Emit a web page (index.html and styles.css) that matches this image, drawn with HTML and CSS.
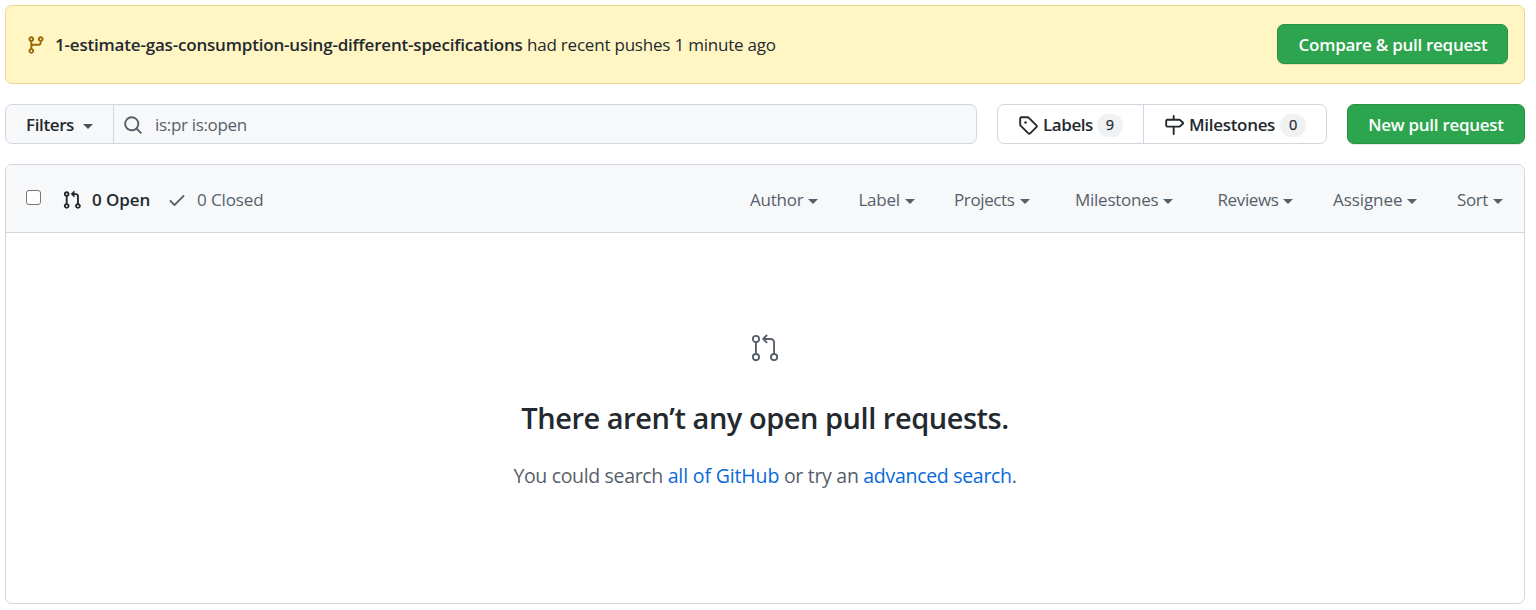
FILE: index.html
```
<!DOCTYPE html>
<html lang="en">
<head>
<meta charset="utf-8">
<title>Pull requests</title>
<link rel="stylesheet" href="styles.css">
</head>
<body>
<div class="flash">
  <svg class="icon flash-icon" viewBox="0 0 16 16"><path d="M11.75 2.5a.75.75 0 100 1.5.75.75 0 000-1.5zm-2.25.75a2.25 2.25 0 113 2.122V6A2.5 2.5 0 0110 8.5H6a1 1 0 00-1 1v1.128a2.251 2.251 0 11-1.5 0V5.372a2.25 2.25 0 111.5 0v1.836A2.492 2.492 0 016 7h4a1 1 0 001-1v-.628A2.25 2.25 0 019.5 3.25zM4.25 12a.75.75 0 100 1.5.75.75 0 000-1.5zM3.5 3.25a.75.75 0 111.5 0 .75.75 0 01-1.5 0z"/></svg>
  <strong class="branch">1-estimate-gas-consumption-using-different-specifications</strong>
  <span class="pushed">had recent pushes 1 minute ago</span>
  <a class="btn-primary compare">Compare &amp; pull request</a>
</div>

<div class="toolbar">
  <div class="search">
    <button class="filters"><span class="bar-text">Filters</span><i class="caret"></i></button>
    <div class="search-field">
      <svg class="icon" viewBox="0 0 16 16"><path d="M11.5 7a4.499 4.499 0 11-8.998 0A4.499 4.499 0 0111.5 7zm-.82 4.74a6 6 0 111.06-1.06l3.04 3.04a.75.75 0 11-1.06 1.06l-3.04-3.04z"/></svg>
      <span>is:pr is:open</span>
    </div>
  </div>
  <div class="subnav">
    <a class="subnav-item labels">
      <svg class="icon" viewBox="0 0 16 16"><path d="M2.5 7.775V2.75a.25.25 0 01.25-.25h5.025a.25.25 0 01.177.073l6.25 6.25a.25.25 0 010 .354l-5.025 5.025a.25.25 0 01-.354 0l-6.25-6.25a.25.25 0 01-.073-.177zm-1.5 0V2.75C1 1.784 1.784 1 2.75 1h5.025c.464 0 .91.184 1.238.513l6.25 6.25a1.75 1.75 0 010 2.474l-5.026 5.026a1.75 1.75 0 01-2.474 0l-6.25-6.25A1.75 1.75 0 011 7.775z"/><circle cx="6" cy="6" r="1"/></svg>
      <span class="subnav-text bar-text">Labels</span><span class="counter">9</span>
    </a>
    <a class="subnav-item milestones">
      <svg class="icon" viewBox="0 0 16 16"><path d="M7.75 0a.75.75 0 01.75.75V3h3.634c.414 0 .814.147 1.13.414l2.07 1.75a1.75 1.75 0 010 2.672l-2.07 1.75a1.75 1.75 0 01-1.13.414H8.5v5.25a.75.75 0 11-1.5 0V10H2.75A1.75 1.75 0 011 8.25v-3.5C1 3.784 1.784 3 2.75 3H7V.75A.75.75 0 017.75 0zm0 8.5h4.384a.25.25 0 00.161-.06l2.07-1.75a.25.25 0 000-.38l-2.07-1.75a.25.25 0 00-.161-.06H2.75a.25.25 0 00-.25.25v3.5c0 .138.112.25.25.25h5z"/></svg>
      <span class="subnav-text bar-text">Milestones</span><span class="counter">0</span>
    </a>
  </div>
  <a class="btn-primary new-pr">New pull request</a>
</div>

<div class="box">
  <div class="box-header">
    <span class="checkbox"></span>
    <a class="state open">
      <svg class="icon" viewBox="0 0 16 16"><path d="M7.177 3.073L9.573.677A.25.25 0 0110 .854v4.792a.25.25 0 01-.427.177L7.177 3.427a.25.25 0 010-.354zM3.75 2.5a.75.75 0 100 1.5.75.75 0 000-1.5zm-2.25.75a2.25 2.25 0 113 2.122v5.256a2.251 2.251 0 11-1.5 0V5.372A2.25 2.25 0 011.5 3.25zM11 2.5h-1V4h1a1 1 0 011 1v5.628a2.251 2.251 0 101.5 0V5A2.5 2.5 0 0011 2.5zm1 10.25a.75.75 0 111.5 0 .75.75 0 01-1.5 0zM3.75 12a.75.75 0 100 1.5.75.75 0 000-1.5z"/></svg>
      <span>0 Open</span>
    </a>
    <a class="state closed">
      <svg class="icon" viewBox="0 0 16 16"><path d="M13.78 4.22a.75.75 0 010 1.06l-7.25 7.25a.75.75 0 01-1.06 0L2.22 9.28a.75.75 0 011.06-1.06L6 10.94l6.72-6.72a.75.75 0 011.06 0z"/></svg>
      <span>0 Closed</span>
    </a>
    <div class="menus">
      <a class="menu"><span>Author</span><i class="caret"></i></a>
      <a class="menu"><span>Label</span><i class="caret"></i></a>
      <a class="menu menu-tight"><span>Projects</span><i class="caret"></i></a>
      <a class="menu"><span>Milestones</span><i class="caret"></i></a>
      <a class="menu menu-tight"><span>Reviews</span><i class="caret"></i></a>
      <a class="menu menu-wide"><span>Assignee</span><i class="caret"></i></a>
      <a class="menu menu-tight"><span>Sort</span><i class="caret"></i></a>
    </div>
  </div>
  <div class="blankslate">
    <svg class="blank-icon" viewBox="0 0 24 24"><circle cx="4.75" cy="4.75" r="2.5"/><circle cx="4.75" cy="19.25" r="2.5"/><circle cx="19.25" cy="19.25" r="2.5"/><path d="M4.75 7.25v9.5M13.25 2l-2.75 2.75 2.75 2.75M10.75 4.75h5.75a2.75 2.75 0 0 1 2.75 2.75v9.25"/></svg>
    <h3 class="blank-title">There aren’t any open pull requests.</h3>
    <p class="blank-text"><span class="lead">You could search</span> <a class="link link-all">all of GitHub</a> or try an <a class="link">advanced search</a>.</p>
  </div>
</div>
</body>
</html>
```
FILE: styles.css
```
* { box-sizing: border-box; }

body {
  margin: 0;
  padding: 5px 11px 6px 5px;
  background: #fff;
  color: #24292f;
  font: 17px/24px "Open Sans", "Noto Sans", sans-serif;
  letter-spacing: -0.28px;
  white-space: nowrap;
}

.icon { width: 20px; height: 20px; flex: none; fill: currentColor; fill-rule: evenodd; }

.caret {
  flex: none;
  width: 0;
  height: 0;
  border: 5px solid transparent;
  border-top-color: currentColor;
  border-bottom: 0;
}

.btn-primary {
  display: flex;
  flex: none;
  align-items: center;
  justify-content: center;
  height: 40px;
  padding-top: 2px;
  border: 1px solid #2a9147;
  border-radius: 7px;
  background: #2da44e;
  box-shadow: 0 1px 0 rgba(27, 31, 36, 0.1);
  color: #fff;
  font-weight: 600;
}

/* Recent push banner */
.flash {
  display: flex;
  align-items: center;
  height: 79px;
  padding: 0 16px 0 20px;
  border: 1px solid #eed888;
  border-radius: 7px;
  background: #fff6c4;
}
.flash-icon { margin-right: 9px; color: #9a6700; }
.branch { width: 472px; font-weight: 600; letter-spacing: -0.19px; }
.pushed { letter-spacing: -0.21px; }
.compare { width: 231px; margin: 0 0 2px auto; padding-left: 1px; }

/* Search and navigation */
.toolbar { display: flex; gap: 20px; height: 40px; margin: 20px 0; }
.bar-text { padding-top: 2px; }
.search {
  display: flex;
  flex: 1;
  border: 1px solid #d0d7de;
  border-radius: 7px;
  background: #f6f8fa;
  overflow: hidden;
}
.filters {
  display: flex;
  align-items: center;
  gap: 9px;
  width: 108px;
  padding: 0 0 0 20px;
  border: 0;
  border-right: 1px solid #d0d7de;
  background: #f6f8fa;
  color: inherit;
  font: inherit;
  font-weight: 600;
  letter-spacing: -0.38px;
}
.filters .caret { margin-top: 4px; color: #4b5056; }
.search-field {
  display: flex;
  flex: 1;
  align-items: center;
  gap: 12px;
  padding: 2px 0 0 9px;
  color: #57606a;
  letter-spacing: -0.32px;
  box-shadow: inset 0 1px 0 rgba(208, 215, 222, 0.2);
}

.subnav {
  display: flex;
  width: 330px;
  border: 1px solid #d0d7de;
  border-radius: 7px;
}
.subnav-item { display: flex; align-items: center; padding-left: 20px; font-weight: 600; }
.subnav-item .icon { margin-top: 2px; }
.labels { width: 146px; border-right: 1px solid #d0d7de; letter-spacing: -0.42px; }
.milestones { letter-spacing: -0.31px; }
.subnav-text { margin: 0 4px 0 5px; }
.milestones .subnav-text { margin: 0 5px; }
.counter {
  width: 26px;
  height: 23px;
  margin-top: 3px;
  border-radius: 12px;
  background: #eff1f3;
  font-size: 14.5px;
  font-weight: 400;
  line-height: 22px;
  text-align: center;
  letter-spacing: 0;
  -webkit-text-stroke: 0.25px currentColor;
}
.new-pr { width: 178px; }

/* Pull request list */
.box { height: 440px; border: 1px solid #d0d7de; border-radius: 7px; overflow: hidden; }
.box-header {
  display: flex;
  align-items: center;
  height: 68px;
  padding: 2px 21px 0 20px;
  border-bottom: 1px solid #d0d7de;
  background: #f6f8fa;
  color: #57606a;
}
.checkbox {
  width: 15px;
  height: 15px;
  margin: 0 21px 4px 0;
  border: 1px solid #767676;
  border-radius: 3px;
  background: #fff;
}
.state { display: flex; align-items: center; gap: 10px; }
.open { width: 105px; color: #24292f; font-weight: 600; letter-spacing: -0.08px; }
.closed { letter-spacing: -0.12px; }
.menus {
  display: grid;
  grid-template-columns: 108.5px 95.5px 121px 142.5px 115.5px 124px 46px;
  margin-left: auto;
}
.menu { display: flex; align-items: center; gap: 5px; letter-spacing: -0.25px; }
.menu-tight { letter-spacing: -0.38px; }
.menu-wide { letter-spacing: -0.07px; }
.menu .caret { margin-top: 3px; }

.blankslate { display: flex; flex-direction: column; align-items: center; padding-top: 100px; }
.blank-icon { width: 30px; height: 30px; fill: none; stroke: #57606a; stroke-width: 1.5; stroke-linecap: round; stroke-linejoin: round; }
.blank-title { margin: 35px 0 0; font-size: 29px; font-weight: 600; line-height: 40px; letter-spacing: -0.47px; }
.blank-text { margin: 23px 0 0; color: #57606a; font-size: 19.5px; line-height: 30px; letter-spacing: -0.3px; }
.lead { letter-spacing: -0.34px; }
.link { color: #0969da; }
.link-all { letter-spacing: -0.15px; }
```
